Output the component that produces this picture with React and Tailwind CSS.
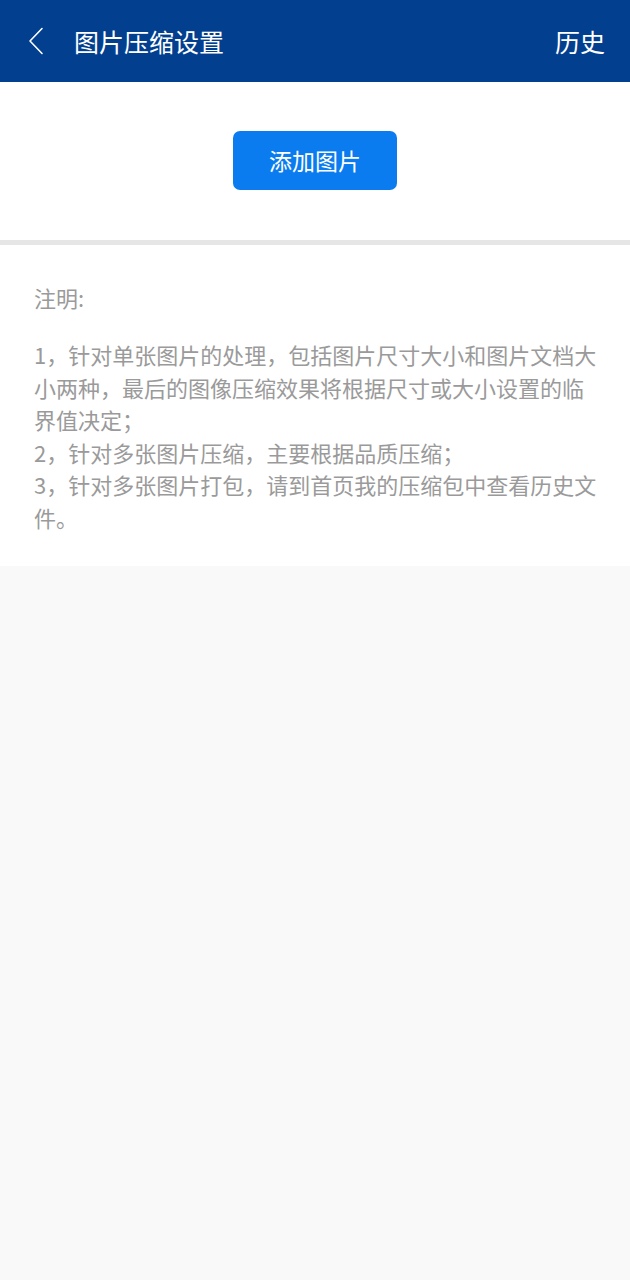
const NOTES = [
  '1，针对单张图片的处理，包括图片尺寸大小和图片文档大小两种，最后的图像压缩效果将根据尺寸或大小设置的临界值决定；',
  '2，针对多张图片压缩，主要根据品质压缩；',
  '3，针对多张图片打包，请到首页我的压缩包中查看历史文件。'
];

export default function App() {
  return (
    <div
      className="min-h-screen bg-[#f9f9f9]"
      style={{ fontFamily: '"Noto Sans CJK SC", "Noto Sans", sans-serif' }}
    >
      {/* Header */}
      <div className="h-[82px] bg-[#033f8f] flex items-center text-white">
        <button className="w-[74px] h-full flex items-center pl-[28px]">
          <svg width="16" height="28" viewBox="0 0 16 28" fill="none">
            <path d="M14 1.5 L2 14 L14 26.5" stroke="white" strokeWidth="1.6" strokeLinecap="round" strokeLinejoin="round" />
          </svg>
        </button>
        <h1 className="text-[25px] leading-none flex-1">图片压缩设置</h1>
        <span className="text-[25px] leading-none pr-[25px]">历史</span>
      </div>

      {/* Add button */}
      <div className="bg-white flex justify-center pt-[49px] pb-[50px]">
        <button className="w-[164px] h-[59px] rounded-[7px] bg-[#0a7cf0] text-white text-[23px]">
          添加图片
        </button>
      </div>
      <div className="h-[5px] bg-[#e6e6e6]" />

      {/* Notes */}
      <div className="bg-white pl-[34px] pr-[30px] pt-[36px] pb-[33px] text-[#9a9a9a] text-[22px]">
        <p className="leading-[32px]">注明:</p>
        <div className="mt-[25px] leading-[32.5px]">
          {NOTES.map(n => (
            <p key={n}>{n}</p>
          ))}
        </div>
      </div>
    </div>
  );
}
